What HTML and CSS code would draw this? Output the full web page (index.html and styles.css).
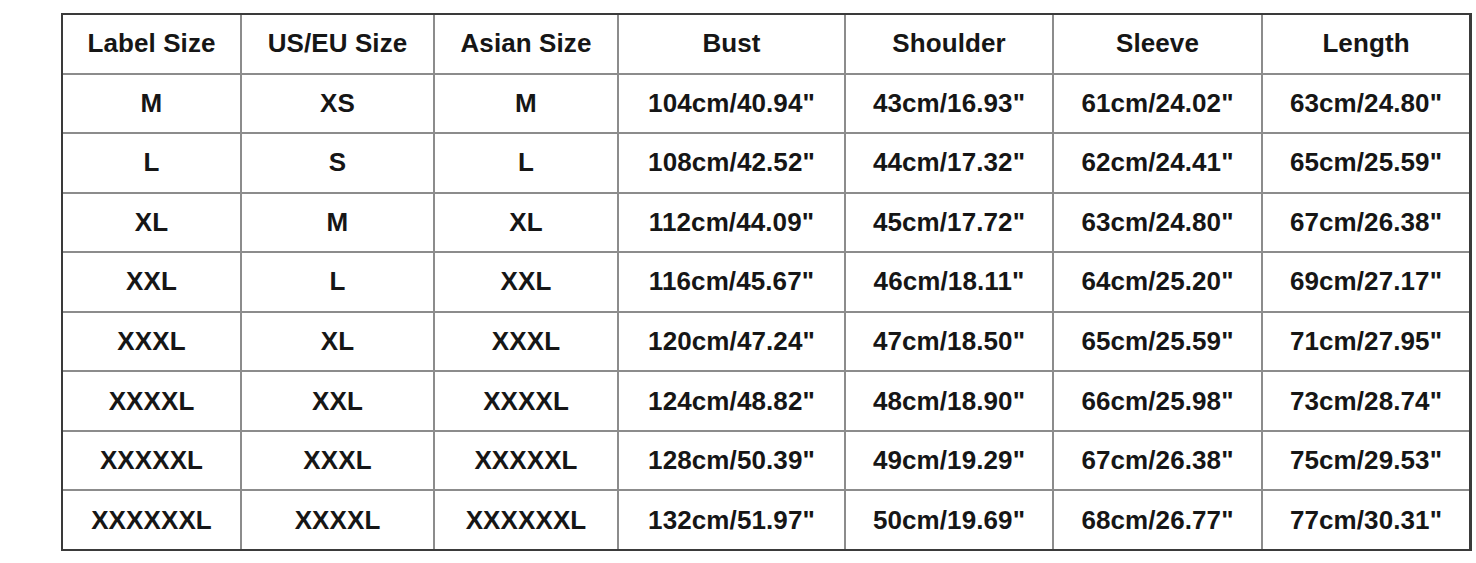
FILE: index.html
```html
<!DOCTYPE html>
<html lang="en">
<head>
<meta charset="utf-8">
<title>Size Chart</title>
<link rel="stylesheet" href="styles.css">
</head>
<body>
<div class="chart">
  <div class="cell">Label Size</div><div class="cell">US/EU Size</div><div class="cell">Asian Size</div><div class="cell">Bust</div><div class="cell">Shoulder</div><div class="cell">Sleeve</div><div class="cell">Length</div>
  <div class="cell">M</div><div class="cell">XS</div><div class="cell">M</div><div class="cell">104cm/40.94"</div><div class="cell">43cm/16.93"</div><div class="cell">61cm/24.02"</div><div class="cell">63cm/24.80"</div>
  <div class="cell">L</div><div class="cell">S</div><div class="cell">L</div><div class="cell">108cm/42.52"</div><div class="cell">44cm/17.32"</div><div class="cell">62cm/24.41"</div><div class="cell">65cm/25.59"</div>
  <div class="cell">XL</div><div class="cell">M</div><div class="cell">XL</div><div class="cell">112cm/44.09"</div><div class="cell">45cm/17.72"</div><div class="cell">63cm/24.80"</div><div class="cell">67cm/26.38"</div>
  <div class="cell">XXL</div><div class="cell">L</div><div class="cell">XXL</div><div class="cell">116cm/45.67"</div><div class="cell">46cm/18.11"</div><div class="cell">64cm/25.20"</div><div class="cell">69cm/27.17"</div>
  <div class="cell">XXXL</div><div class="cell">XL</div><div class="cell">XXXL</div><div class="cell">120cm/47.24"</div><div class="cell">47cm/18.50"</div><div class="cell">65cm/25.59"</div><div class="cell">71cm/27.95"</div>
  <div class="cell">XXXXL</div><div class="cell">XXL</div><div class="cell">XXXXL</div><div class="cell">124cm/48.82"</div><div class="cell">48cm/18.90"</div><div class="cell">66cm/25.98"</div><div class="cell">73cm/28.74"</div>
  <div class="cell">XXXXXL</div><div class="cell">XXXL</div><div class="cell">XXXXXL</div><div class="cell">128cm/50.39"</div><div class="cell">49cm/19.29"</div><div class="cell">67cm/26.38"</div><div class="cell">75cm/29.53"</div>
  <div class="cell">XXXXXXL</div><div class="cell">XXXXL</div><div class="cell">XXXXXXL</div><div class="cell">132cm/51.97"</div><div class="cell">50cm/19.69"</div><div class="cell">68cm/26.77"</div><div class="cell">77cm/30.31"</div>
</div>
</body>
</html>
```

FILE: styles.css
```css
html, body {
  margin: 0;
  padding: 0;
  background: #ffffff;
}

body {
  padding: 13px 0 0 61px;
  font-family: "Liberation Sans", Arial, sans-serif;
}

.chart {
  display: grid;
  grid-template-columns: 177px 191px 182px 225px 206px 207px 206px;
  grid-template-rows: repeat(9, 1fr);
  gap: 2px;
  width: 1406px;
  height: 534px;
  border: 2px solid #3a3a3a;
  border-right-width: 3px;
  background: #8c8c8c;
}

.cell {
  display: flex;
  align-items: center;
  justify-content: center;
  background: #ffffff;
  color: #161616;
  font-size: 26px;
  font-weight: bold;
  letter-spacing: 0.1px;
  white-space: nowrap;
}
```
